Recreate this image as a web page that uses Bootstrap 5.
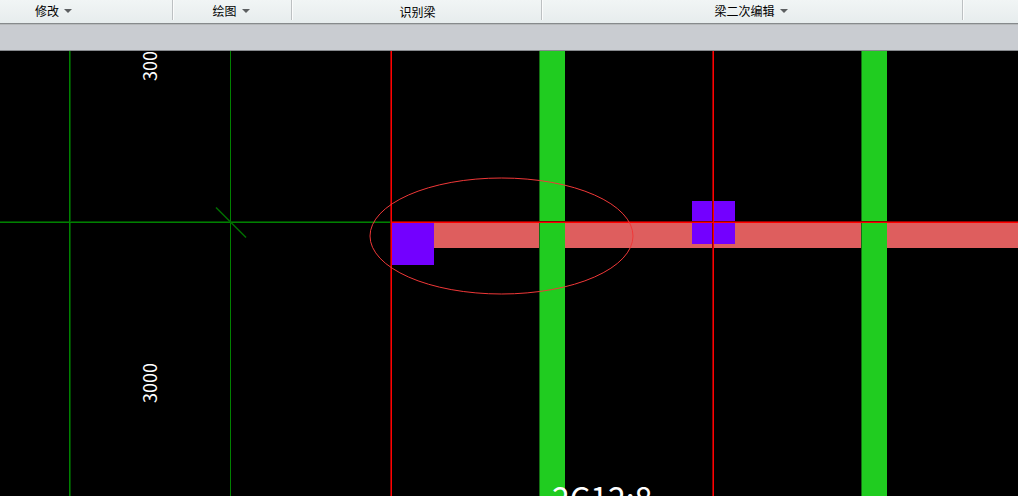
<!DOCTYPE html>
<html lang="zh-CN">
<head>
<meta charset="utf-8">
<meta name="viewport" content="width=device-width, initial-scale=1">
<title>梁二次编辑</title>
<link href="https://cdn.jsdelivr.net/npm/bootstrap@5.3.0/dist/css/bootstrap.min.css" rel="stylesheet">
<style>
  body { font-family: "Noto Sans CJK SC", sans-serif; font-size: 12px; line-height: 18px; background: #000; }
  .ribbon { height: 25px; background: linear-gradient(#f1f5f5, #e6eced); border-bottom: 1px solid #b6b9bb; box-shadow: inset 0 -1px #868a8c; }
  .ribbon-group { height: 20px; padding-top: 1px; border-right: 1px solid #bcc0c2; box-shadow: 1px 0 #fbfcfc; }
  .group-modify { width: 173px; padding-left: 35px; }
  .group-draw { width: 119px; padding-right: 2px; }
  .group-identify { width: 250px; padding-top: 3px; padding-left: 2px; }
  .group-edit { width: 421px; padding-right: 2px; }
  .menu-btn { display: flex; align-items: center; gap: 5px; padding: 0; border: 0; background: none; color: #000; line-height: 18px; }
  .option-strip { height: 26px; background: #c9ccd1; border-bottom: 1px solid #86898d; }
  .drawing { min-height: 0; }
  .grid-green { stroke: #008000; }
  .grid-soft { stroke: #004800; }
  .axis-red { stroke: #ff0000; }
  .axis-soft { stroke: #900000; }
  .tick { stroke: #007000; stroke-width: 1.4; }
  .beam-red { fill: #de5e5e; }
  .beam-edge { fill: #147014; }
  .beam-green { fill: #20cc20; }
  .pillar { fill: #7300ff; }
  .note { fill: none; stroke: #f03838; }
  .dim-text { fill: #fff; font-size: 18px; }
  .rebar-text { fill: #fff; font-size: 32px; }
</style>
</head>
<body class="vh-100 d-flex flex-column overflow-hidden">
<nav class="ribbon d-flex flex-shrink-0 overflow-hidden" aria-label="功能区">
  <div class="ribbon-group group-modify d-flex flex-shrink-0">
    <button type="button" class="menu-btn">修改<svg width="8" height="5" aria-hidden="true"><path d="M0 1H8L4 5Z" fill="#5c5f61"/></svg></button>
  </div>
  <div class="ribbon-group group-draw d-flex flex-shrink-0 justify-content-center">
    <button type="button" class="menu-btn">绘图<svg width="8" height="5" aria-hidden="true"><path d="M0 1H8L4 5Z" fill="#5c5f61"/></svg></button>
  </div>
  <div class="ribbon-group group-identify d-flex flex-shrink-0 justify-content-center">
    <button type="button" class="menu-btn">识别梁</button>
  </div>
  <div class="ribbon-group group-edit d-flex flex-shrink-0 justify-content-center">
    <button type="button" class="menu-btn">梁二次编辑<svg width="8" height="5" aria-hidden="true"><path d="M0 1H8L4 5Z" fill="#5c5f61"/></svg></button>
  </div>
</nav>
<div class="option-strip flex-shrink-0"></div>
<main class="drawing flex-grow-1 overflow-hidden">
  <svg class="d-block w-100 h-100" role="img" aria-label="梁平面图">
    <!-- grid axes, each with a soft edge -->
    <g class="grid-soft">
      <line x1="70.5" y1="0" x2="70.5" y2="100%"/>
      <line x1="0" y1="170.5" x2="391" y2="170.5"/>
    </g>
    <g class="grid-green">
      <line x1="69.5" y1="0" x2="69.5" y2="100%"/>
      <line x1="230.5" y1="0" x2="230.5" y2="100%"/>
      <line x1="0" y1="171.5" x2="391" y2="171.5"/>
    </g>
    <line class="tick" x1="216" y1="156.500" x2="246" y2="186.500"/>
    <!-- horizontal beam -->
    <rect class="beam-red" x="391" y="171" width="100%" height="26"/>
    <!-- columns -->
    <rect class="pillar" x="391" y="171" width="43" height="43"/>
    <rect class="pillar" x="692" y="150" width="43" height="43"/>
    <!-- vertical beams -->
    <rect class="beam-edge" x="539" y="0" width="1" height="100%"/>
    <rect class="beam-green" x="540" y="0" width="25" height="100%"/>
    <rect class="beam-edge" x="861" y="0" width="1" height="100%"/>
    <rect class="beam-green" x="862" y="0" width="25" height="100%"/>
    <!-- beam axes, each with a soft edge -->
    <g class="axis-soft">
      <line x1="390.500" y1="0" x2="390.500" y2="100%"/>
      <line x1="712.500" y1="0" x2="712.500" y2="100%"/>
      <line x1="391" y1="170.500" x2="100%" y2="170.500"/>
    </g>
    <g class="axis-red">
      <line x1="391.500" y1="0" x2="391.500" y2="100%"/>
      <line x1="713.500" y1="0" x2="713.500" y2="100%"/>
      <line x1="391" y1="171.500" x2="100%" y2="171.500"/>
    </g>
    <ellipse class="note" cx="501.500" cy="185" rx="131.500" ry="58"/>
    <!-- dimensions and rebar label -->
    <text class="dim-text" transform="translate(157 352) rotate(-90)">3000</text>
    <text class="dim-text" transform="translate(157 30) rotate(-90)">3000</text>
    <text class="rebar-text" x="552" y="460">2C12;8</text>
  </svg>
</main>
<script src="https://cdn.jsdelivr.net/npm/bootstrap@5.3.0/dist/js/bootstrap.bundle.min.js"></script>
</body>
</html>
